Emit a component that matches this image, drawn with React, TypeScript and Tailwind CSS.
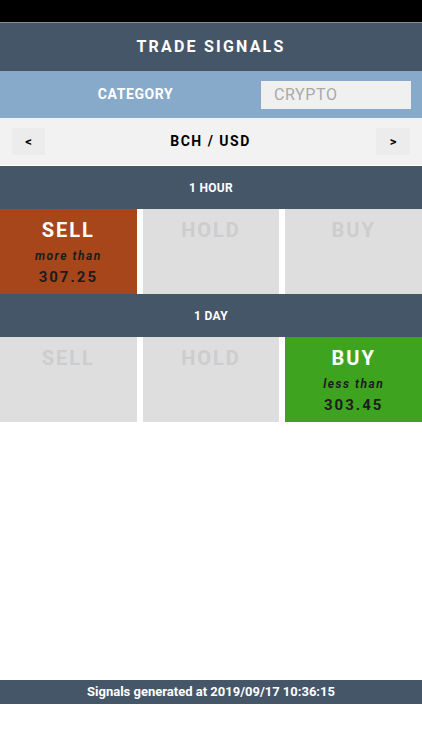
import React from "react";

type Signal = "SELL" | "HOLD" | "BUY";

type Frame = {
  label: string;
  active: Signal;
  hint: string;
  price: string;
};

const FRAMES: Frame[] = [
  { label: "1 HOUR", active: "SELL", hint: "more than", price: "307.25" },
  { label: "1 DAY", active: "BUY", hint: "less than", price: "303.45" },
];

const SIGNALS: Signal[] = ["SELL", "HOLD", "BUY"];

function Cell({ name, frame }: { name: Signal; frame: Frame }) {
  const on = frame.active === name;
  const bg = !on ? "bg-[#dedede]" : name === "SELL" ? "bg-[#a8461b]" : "bg-[#3ea41f]";
  return (
    <div className={`h-[85px] flex flex-col items-center pt-[10px] ${bg}`}>
      <p
        className={`text-[20px] font-bold tracking-[2px] leading-[22px] ${
          on ? "text-white" : "text-[#cdcdcd]"
        }`}
      >
        {name}
      </p>
      {on && (
        <>
          <p className="mt-[7px] text-[12px] italic font-bold tracking-[1.5px] leading-[16px] text-[#1c1c1c]">
            {frame.hint}
          </p>
          <p className="mt-[4px] text-[15px] font-bold tracking-[2px] leading-[18px] text-[#1c1c1c]">
            {frame.price}
          </p>
        </>
      )}
    </div>
  );
}

export default function App() {
  return (
    <div className="w-[422px] h-[750px] flex flex-col bg-white font-['Roboto','Liberation_Sans',sans-serif]">
      <div className="h-[23px] bg-black border-b border-[#8a8f96] shrink-0" />

      <div className="h-[48px] bg-[#465669] flex items-center justify-center shrink-0">
        <h1 className="text-white text-[16px] font-bold tracking-[2.2px]">TRADE SIGNALS</h1>
      </div>

      <div className="h-[47px] bg-[#87aaca] flex items-center shrink-0">
        <div className="flex-1 flex justify-center pl-[10px]">
          <span className="text-white text-[14px] font-bold tracking-[0.6px]">CATEGORY</span>
        </div>
        <div className="w-[150px] h-[28px] mr-[11px] bg-[#f0f0f0] flex items-center px-[13px]">
          <span className="text-[#a9a9a9] text-[16px] tracking-[0.6px]">CRYPTO</span>
        </div>
      </div>

      <div className="h-[48px] bg-[#f2f2f2] border-b border-white flex items-center justify-between px-[12px] shrink-0">
        <button className="w-[33px] h-[27px] bg-[#ececec] flex items-center justify-center text-[13px] font-bold text-black">
          &lt;
        </button>
        <span className="text-[14px] font-bold tracking-[1.5px] text-black">BCH / USD</span>
        <button className="w-[34px] h-[27px] bg-[#ececec] flex items-center justify-center text-[13px] font-bold text-black">
          &gt;
        </button>
      </div>

      {FRAMES.map((f) => (
        <div key={f.label} className="shrink-0">
          <div className="h-[43px] bg-[#465669] flex items-center justify-center">
            <span className="text-white text-[12px] font-bold tracking-[0.3px]">{f.label}</span>
          </div>
          <div className="grid grid-cols-3 gap-[6px]">
            {SIGNALS.map((s) => (
              <Cell key={s} name={s} frame={f} />
            ))}
          </div>
        </div>
      ))}

      <div className="flex-1" />

      <div className="h-[24px] bg-[#465669] flex items-center justify-center shrink-0">
        <span className="text-white text-[13px] font-bold">Signals generated at 2019/09/17 10:36:15</span>
      </div>
      <div className="h-[46px] shrink-0" />
    </div>
  );
}
